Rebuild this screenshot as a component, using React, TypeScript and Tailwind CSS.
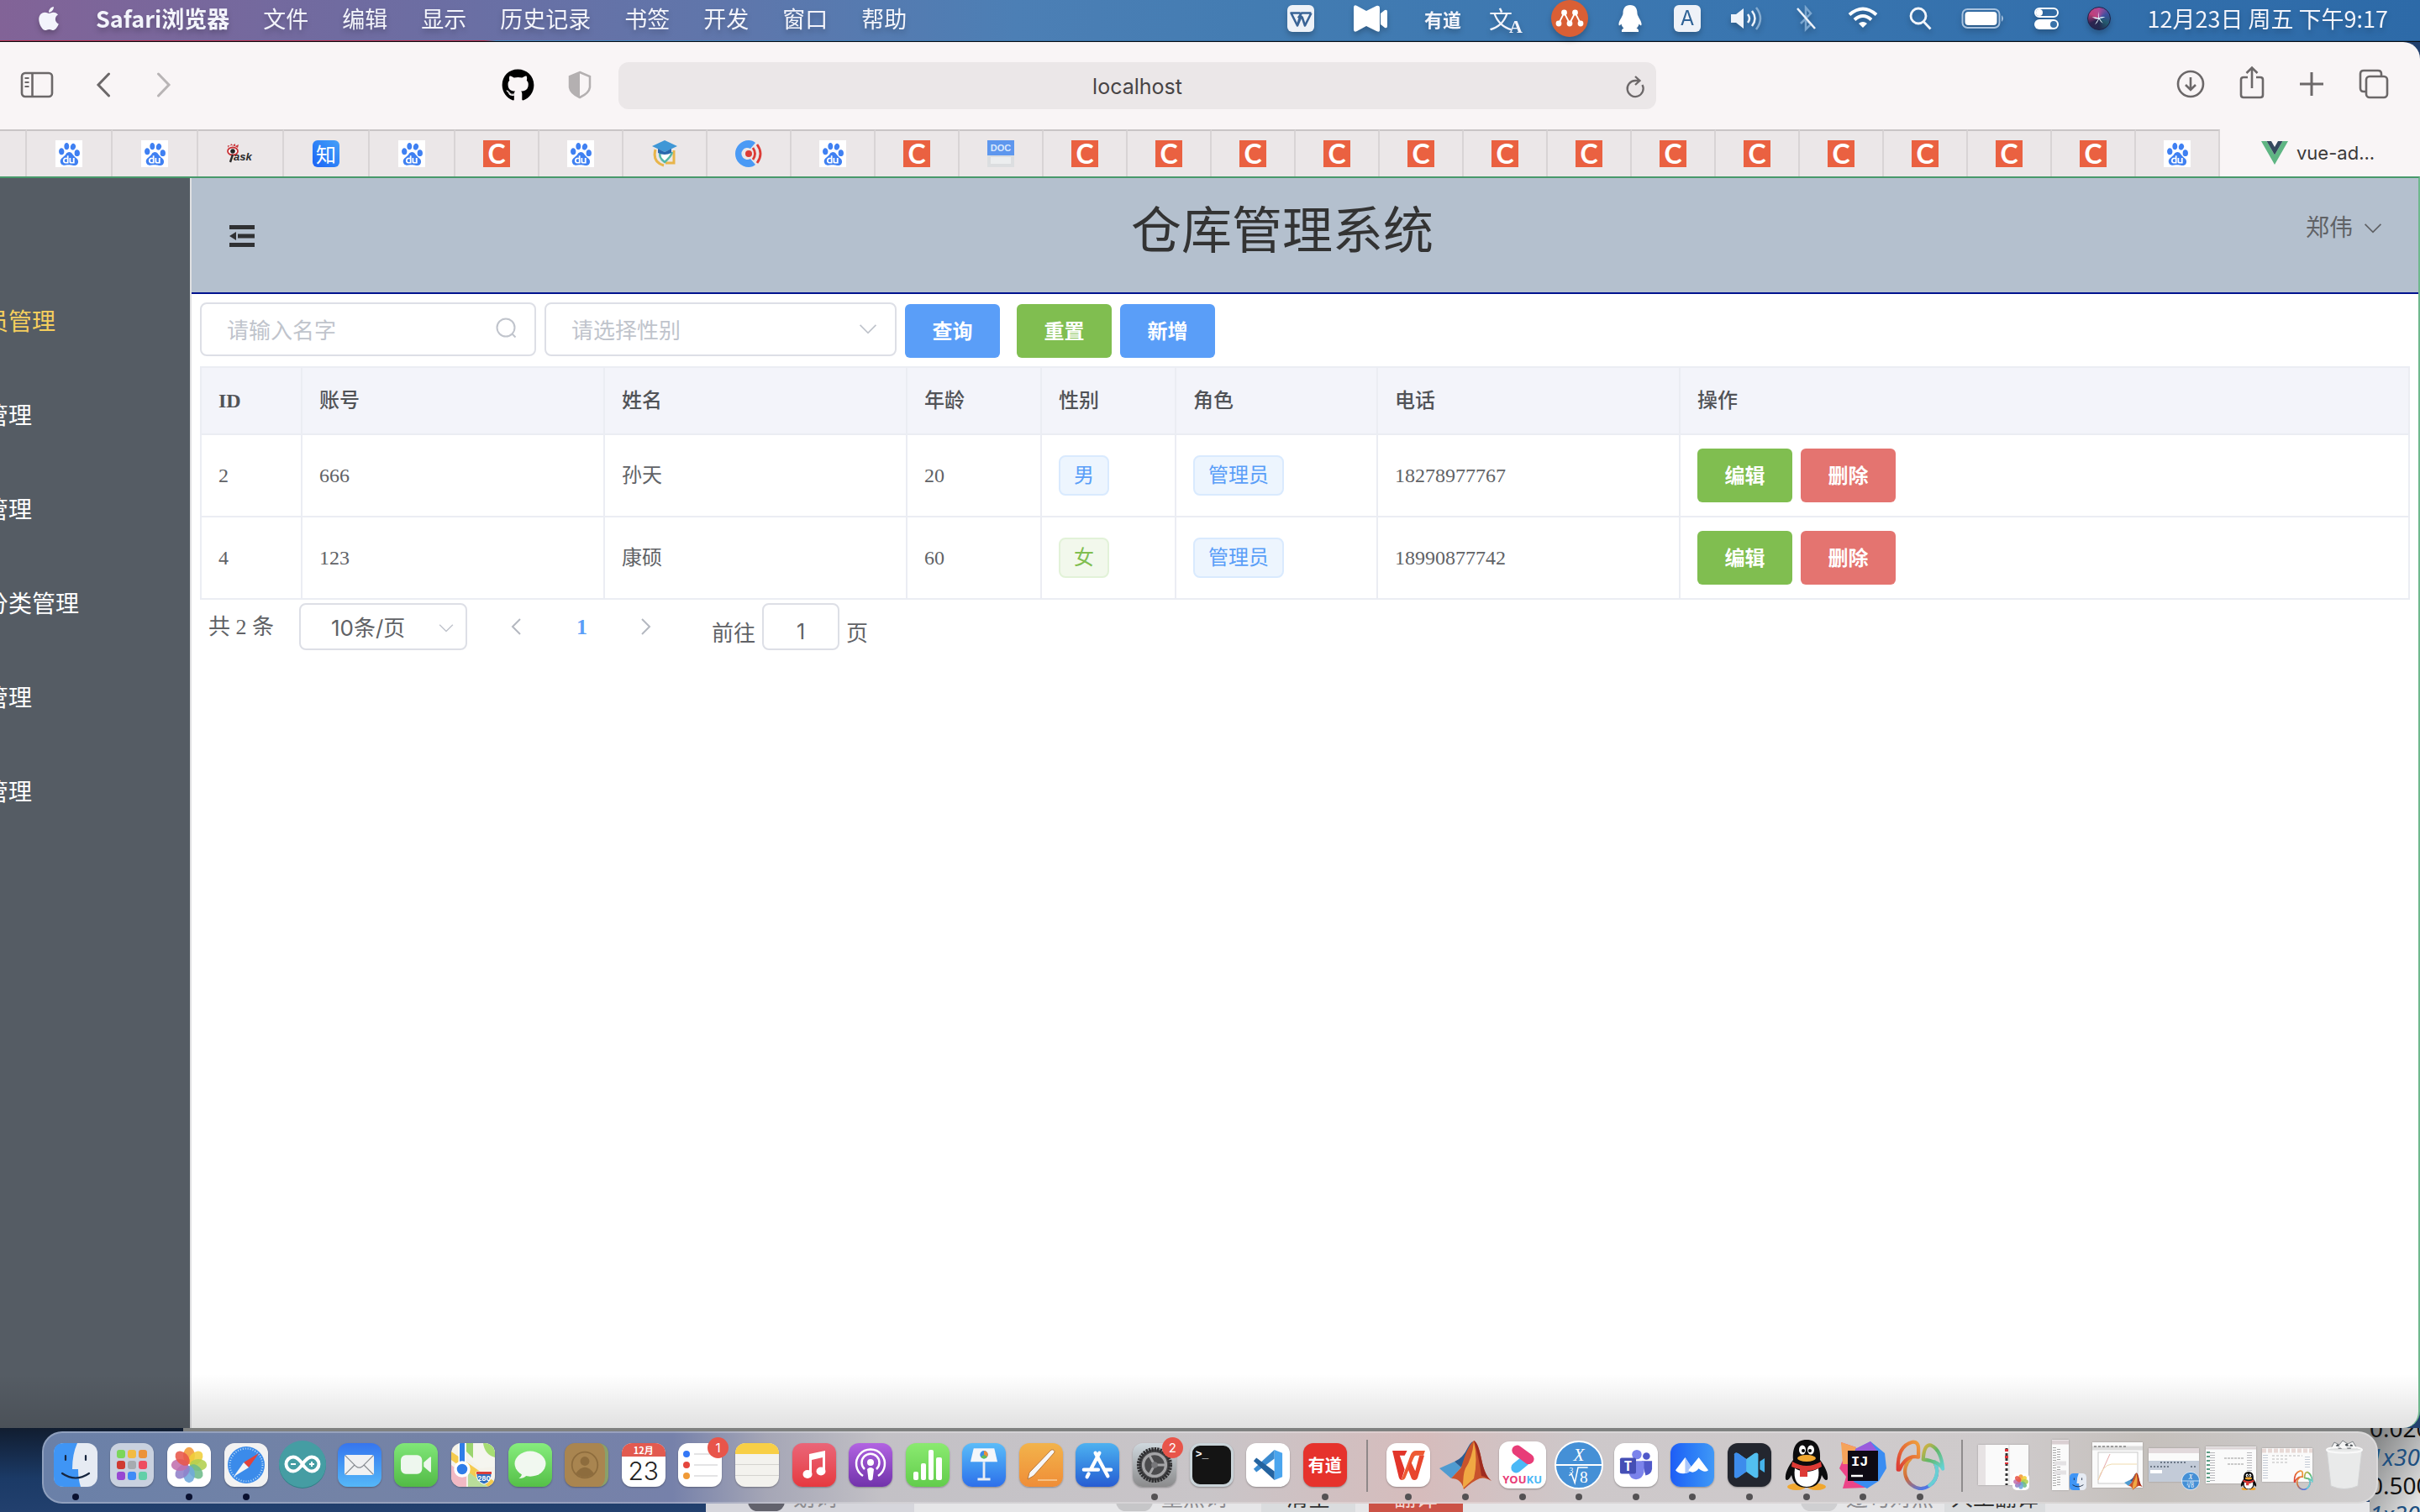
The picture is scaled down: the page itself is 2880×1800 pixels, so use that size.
import React from "react";
import { FaApple, FaGithub } from "react-icons/fa";
import { SiBaidu } from "react-icons/si";

const SANS = "font-['Inter','Noto_Sans_CJK_SC',sans-serif]";
const CJK = "font-['Noto_Sans_CJK_SC',sans-serif]";
const SERIF = "font-['Liberation_Serif','Noto_Sans_CJK_SC',serif]";

/* ---------- menu bar ---------- */

const menus = ["文件", "编辑", "显示", "历史记录", "书签", "开发", "窗口", "帮助"];

function MenuBar() {
  return (
    <div className="shrink-0">
      <div className={`${CJK} flex h-12 items-center justify-between bg-[linear-gradient(90deg,#826397_0%,#706ba0_14%,#5f76ab_30%,#4c7fb5_42%,#437cb2_52%,#3a76b0_70%,#2d6aa8_100%)] pl-[42px] pr-[38px] text-[27px] leading-[46px] text-[#f3f4fb]`}>
        <nav className="flex items-center gap-10 pb-1 drop-shadow-[0_4px_3px_rgba(0,0,0,0.22)]">
          <button aria-label="Apple"><FaApple className="size-8" /></button>
          <button className="font-bold">Safari浏览器</button>
          {menus.map((m) => <button key={m}>{m}</button>)}
        </nav>
        <div className="flex items-center gap-8 pb-1 drop-shadow-[0_4px_3px_rgba(0,0,0,0.22)]">
          <span className="flex w-10 justify-center">
            <svg viewBox="0 0 32 32" className="size-8"><rect width="32" height="32" rx="6" fill="#eef2f8" /><path d="M16 10.500L12 24.500 4.500 9.500H15.500M28.500 9.500L21 24.500 17.500 14M13 15.500L17 9.500H28.500M12 24.500L17 12.500" fill="none" stroke="#3a6496" strokeWidth="2.600" strokeLinejoin="round" /></svg>
          </span>
          <span className="flex w-[62px] justify-center">
            <svg viewBox="0 0 40 32" className="h-8 w-10" fill="#fff"><path d="M0 3Q0-1 4 1l11 6L27 1q4-1 4 3v26q0 3-4 1l-12-6-11 6q-4 2-4-2zM32 10l5-4q3-1 3 2v17q0 3-3 2l-5-4z" /></svg>
          </span>
          <span className="w-[46px] text-center text-[22px] font-bold">有道</span>
          <span className="flex w-[42px] items-center"><span className="text-[28px]">文</span><span className="-ml-1 mt-5 font-['Liberation_Serif',serif] text-[22px] leading-none font-bold">A</span></span>
          <svg viewBox="0 0 44 44" className="size-11"><circle cx="22" cy="22" r="22" fill="#d95f35" /><path d="M9 28L15.500 15l6.500 13 6.500-13L35 28" fill="none" stroke="#fff" strokeWidth="1.800" /><g fill="#fff"><circle cx="15.500" cy="15" r="3.400" /><circle cx="28.500" cy="15" r="3.400" /><circle cx="9" cy="28" r="3.400" /><circle cx="22" cy="28" r="3.400" /><circle cx="35" cy="28" r="3.400" /></g></svg>
          <span className="flex w-9 justify-center">
            <svg viewBox="0 0 28 32" className="h-8 w-7" fill="#fff"><path d="M14 0c6 0 8.500 4 8.500 10 0 3 4.500 8 5 12 .3 3-1 3-3 .5-.5 2.500-1.500 4-3 5 2 1 3 2 2.500 4.500H4C3.500 29.500 4.500 28.500 6.500 27.500c-1.500-1-2.500-2.500-3-5-2 2.500-3.300 2.500-3-.5.5-4 5-9 5-12C5.500 4 8 0 14 0z" /></svg>
          </span>
          <span className="flex w-9 justify-center"><span className={`${SANS} size-8 rounded-[6px] bg-[#eef2f8] text-center text-[24px] leading-8 text-[#2f6396]`}>A</span></span>
          <svg viewBox="0 0 42 32" className="h-8 w-[42px]"><path d="M2 11h6l9-7v24l-9-7H2z" fill="#eef3fa" /><path d="M22 11q4 5 0 10M27 7q7 9 0 18" fill="none" stroke="#eef3fa" strokeWidth="2.500" /><path d="M32 3q10 13 0 26" fill="none" stroke="#86acd0" strokeWidth="2.500" /></svg>
          <svg viewBox="0 0 34 32" className="h-8 w-[34px]" fill="none"><path d="M11 22L23 10l-6-7v26l6-6-4-4" stroke="#7ba6cf" strokeWidth="2.500" /><path d="M7 4l21 24" stroke="#eef3fa" strokeWidth="2.500" /></svg>
          <svg viewBox="0 0 38 30" className="h-[30px] w-[38px]" fill="none" stroke="#fff" strokeWidth="4"><path d="M3 10.500q16-14 32 0M9 16.500q10-9 20 0" /><path d="M19 26l-5-5q5-4 10 0z" fill="#fff" stroke="none" /></svg>
          <svg viewBox="0 0 34 32" className="h-8 w-[34px]" fill="none" stroke="#f3f6fb" strokeWidth="2.800"><circle cx="15" cy="13" r="9" /><path d="M21.500 20l8 8.500" /></svg>
          <svg viewBox="0 0 52 26" className="h-[26px] w-[52px]"><rect x="1.500" y="2" width="44" height="22" rx="6" fill="none" stroke="#a9c3df" strokeWidth="2" /><rect x="4.500" y="5" width="38" height="16" rx="4" fill="#fff" /><path d="M48 9q4 4 0 8z" fill="#a9c3df" /></svg>
          <svg viewBox="0 0 34 32" className="h-8 w-[34px]"><rect x="4" y="4" width="27" height="10" rx="5" fill="none" stroke="#fff" strokeWidth="2" /><circle cx="9" cy="9" r="4" fill="#fff" /><rect x="3" y="17" width="29" height="12" rx="6" fill="#fff" /><circle cx="26" cy="23" r="4" fill="#3a72a8" /></svg>
          <span className="flex size-7 items-center justify-center rounded-full border border-[#1f2148] bg-[conic-gradient(#b04a96,#3d4fa0,#235a6e,#23284f,#2b2350,#c1407a,#b04a96)]"><svg viewBox="0 0 24 24" className="size-5"><path d="M12 2q-1 6 0 9 4-2 9-1-5 2-8 2 2 4 5 7-4-2-6-6-2 5-6 8 3-5 5-8-4 0-9-3 5 0 9 1-1-4 1-9z" fill="#e6f8ff" /></svg></span>
          <time className="w-[298px] text-right whitespace-nowrap">12月23日 周五 下午9:17</time>
        </div>
      </div>
      <div className="h-px bg-[linear-gradient(90deg,#b5304d_20%,#4a86bd_20.500%,#2f6494_60%,#27598c_100%)]" />
      <div className="h-px bg-[#080c12]" />
    </div>
  );
}

/* ---------- browser toolbar ---------- */

function Toolbar() {
  return (
    <div className="flex h-[104px] shrink-0 items-center rounded-tr-[20px] bg-[#f9f5f6] text-[#6c6869]">
      <div className="flex w-[736px] shrink-0 items-center pb-0.5 pl-6 pr-8">
        <button aria-label="Sidebar"><svg viewBox="0 0 40 32" className="h-8 w-10" fill="none" stroke="currentColor" strokeWidth="2.600"><rect x="2" y="2" width="36" height="28" rx="4" /><path d="M14.500 2v28" /><path d="M5.500 8h5M5.500 13h5M5.500 18h5" strokeWidth="2" /></svg></button>
        <button aria-label="Back" className="ml-[50px]"><svg viewBox="0 0 18 30" className="h-[30px] w-[18px]" fill="none" stroke="currentColor" strokeWidth="3" strokeLinecap="round"><path d="M15.500 2L3 15l12.500 13" /></svg></button>
        <button aria-label="Forward" className="ml-[54px] text-[#b8b4b5]"><svg viewBox="0 0 18 30" className="h-[30px] w-[18px]" fill="none" stroke="currentColor" strokeWidth="3" strokeLinecap="round"><path d="M2.500 2L15 15 2.500 28" /></svg></button>
        <button aria-label="GitHub" className="ml-auto text-black"><FaGithub className="size-[39px]" /></button>
        <button aria-label="Privacy" className="ml-10 text-[#b4b0b1]"><svg viewBox="0 0 28 34" className="h-[34px] w-7"><path d="M14 2l12 5v13q-1 7-12 12Q3 27 2 20V7z" fill="none" stroke="currentColor" strokeWidth="2.500" /><path d="M14 2L2 7v13q1 7 12 12z" fill="currentColor" /></svg></button>
      </div>
      <div className="flex h-14 flex-1 items-center rounded-xl bg-[#ebe7e8] pr-3 pt-1">
        <input aria-label="Address" defaultValue="localhost" className={`${SANS} ml-3 min-w-0 flex-1 bg-transparent pl-[26px] text-center text-[25px] text-[#474445] outline-none`} />
        <button aria-label="Reload"><svg viewBox="0 0 26 28" className="h-7 w-[26px]" fill="none" stroke="currentColor" strokeWidth="2.300"><path d="M21.500 11a9.500 9.500 0 1 1-8.500-5h5M13 1l5.500 5L13 11" /></svg></button>
      </div>
      <div className="flex w-[909px] shrink-0 items-center justify-end gap-[41px] pr-[37px] pb-1">
        <button aria-label="Downloads"><svg viewBox="0 0 34 34" className="size-[34px]" fill="none" stroke="currentColor" strokeWidth="2.600"><circle cx="17" cy="17" r="15" /><path d="M17 9v15M11 18l6 6 6-6" /></svg></button>
        <button aria-label="Share"><svg viewBox="0 0 30 40" className="mb-1 h-10 w-[30px]" fill="none" stroke="currentColor" strokeWidth="2.600"><path d="M10 14H5q-3 0-3 3v18q0 3 3 3h20q3 0 3-3V17q0-3-3-3h-5M15 27V3M8.500 9L15 2.500 21.500 9" /></svg></button>
        <button aria-label="New tab"><svg viewBox="0 0 30 30" className="size-[30px]" stroke="currentColor" strokeWidth="3"><path d="M15 1v28M1 15h28" /></svg></button>
        <button aria-label="Tab overview"><svg viewBox="0 0 36 36" className="size-9" fill="none" stroke="currentColor" strokeWidth="2.600"><path d="M8.500 27H6q-4 0-4-4V6q0-4 4-4h17q4 0 4 4v2.500" /><rect x="9" y="9" width="25" height="25" rx="4" /></svg></button>
      </div>
    </div>
  );
}

function Favicon({ kind }: { kind: string }) {
  switch (kind) {
    case "baidu":
      return <span className="flex size-8 items-center justify-center bg-white"><SiBaidu className="size-[27px] text-[#3f80f2]" /></span>;
    case "c":
      return <span className="flex size-8 items-center justify-center bg-[#ea6141] font-['Lato',sans-serif] text-[32px] leading-8 font-bold text-white">C</span>;
    case "zhihu":
      return <span className={`${CJK} flex size-8 items-center justify-center rounded-[6px] bg-linear-to-tr from-[#1e62f5] to-[#46a0f8] text-[24px] leading-none text-white`}>知</span>;
    case "jask":
      return (
        <svg viewBox="0 0 32 32" className="size-8">
          <ellipse cx="7" cy="13" rx="6" ry="4.500" fill="#fff" stroke="#c93236" strokeWidth="1.800" /><circle cx="7" cy="13" r="2.800" fill="#222" /><path d="M1 9Q4 3 13 9L14 5 10 7 10 4 7 6 5 4 4 7 1 6z" fill="#c93236" />
          <path d="M7 17L4 26" stroke="#2b2b2b" strokeWidth="2.400" />
          <text x="8" y="24" fontSize="13" fontWeight="700" fontStyle="italic" fontFamily="Liberation Sans" fill="#2b2b2b">ask</text>
        </svg>
      );
    case "school":
      return (
        <svg viewBox="0 0 32 32" className="size-8">
          <path d="M5 11Q1 26 15 30M27 12v15H17" fill="none" stroke="#e8b54a" strokeWidth="3" /><path d="M11 14q-3 6 5 12 8-7 9-12" fill="#fff" stroke="#56b8a8" strokeWidth="2.500" />
          <path d="M16 0l15 7-15 7L1 7z" fill="#3f97d6" /><path d="M8 10v5q8 4 16 0v-5l-8 4z" fill="#2867ad" />
        </svg>
      );
    case "signal":
      return (
        <svg viewBox="0 0 32 32" className="size-8">
          <path d="M16 0A16 16 0 1 0 16 32q5 0 8-3L18 22a7 7 0 1 1 0-12l6-7q-3-3-8-3z" fill="#4a9af5" /><circle cx="16" cy="16" r="4" fill="#dc3b36" />
          <path d="M21 9q5 7 0 14M26 5q8 11 0 22" fill="none" stroke="#dc3b36" strokeWidth="2.800" />
        </svg>
      );
    case "doc":
      return (
        <span className="flex size-8 flex-col bg-[#dcdee0]">
          <span className="h-[18px] bg-[#5e97ee] text-center font-['Liberation_Sans',sans-serif] text-[11px] leading-[18px] font-bold text-[#dbe8fc]">DOC</span>
          <span className="mx-1 mt-0.5 h-2 bg-[#eceeef]" />
        </span>
      );
    default:
      return null;
  }
}

const wideTabs = ["baidu", "baidu", "jask", "zhihu", "baidu"];
const tabs = ["c", "baidu", "school", "signal", "baidu", "c", "doc", "c", "c", "c", "c", "c", "c", "c", "c", "c", "c", "c", "c", "c", "baidu"];

function TabStrip() {
  return (
    <div className="flex h-14 shrink-0 bg-[#ebe7e8]">
      <div className="w-8 border-r-2 border-t-2 border-r-[#d8d4d5] border-t-[#c9c5c6]" />
      {wideTabs.map((k, i) => (
        <button key={i} aria-label={k} className="flex w-[102px] items-center justify-center border-r-2 border-t-2 border-r-[#d8d4d5] border-t-[#c9c5c6]"><Favicon kind={k} /></button>
      ))}
      {tabs.map((k, i) => (
        <button key={i} aria-label={k} className="flex w-[100px] items-center justify-center border-r-2 border-t-2 border-r-[#d8d4d5] border-t-[#c9c5c6]"><Favicon kind={k} /></button>
      ))}
      <button className={`${SANS} flex flex-1 items-center gap-[10px] bg-[#f9f5f6] pl-[49px] text-[22px] text-[#3b3939]`}>
        <svg viewBox="0 0 32 28" className="h-7 w-8"><path d="M0 0h6.500L16 16.500 25.500 0H32L16 28z" fill="#5fb583" /><path d="M6.500 0H12l4 7 4-7h5.500L16 16.500z" fill="#35495e" /></svg>
        vue-ad...
      </button>
    </div>
  );
}

/* ---------- admin page ---------- */

const sideItems = ["员管理", "管理", "管理", "分类管理", "管理", "管理"];

function Sidebar() {
  return (
    <aside className="w-[228px] shrink-0 overflow-hidden border-r-2 border-[#e0e0e2] bg-[#555c64] pt-[116px]">
      <ul className="-ml-[18px] text-[28px] text-white">
        {sideItems.map((t, i) => (
          <li key={i} className="flex h-28 items-center"><a href="#" className={i === 0 ? "text-[#f6cf5d]" : ""}>{t}</a></li>
        ))}
      </ul>
    </aside>
  );
}

function Chevron({ className }: { className: string }) {
  return <svg viewBox="0 0 24 14" className={className} fill="none" stroke="currentColor" strokeWidth="2"><path d="M1 1l11 11L23 1" /></svg>;
}

function Btn({ tone, children }: { tone: "blue" | "green" | "red"; children: string }) {
  const bg = tone === "blue" ? "bg-[#5a9ef8]" : tone === "green" ? "bg-[#80be50]" : "bg-[#e47470]";
  return <button className={`${CJK} ${bg} h-16 w-[113px] rounded-[6px] pb-0.5 text-[24px] font-bold text-white`}>{children}</button>;
}

function Tag({ tone, children }: { tone: "blue" | "green"; children: string }) {
  const c = tone === "blue" ? "border-[#d9eafe] bg-[#edf5fe] text-[#5a9ef8]" : "border-[#e2f2d8] bg-[#f2f8ec] text-[#80be50]";
  return <span className={`${c} inline-flex h-12 items-center rounded-lg border-2 px-4 text-[24px]`}>{children}</span>;
}

const rows = [
  { id: 2, no: "666", name: "孙天", age: 20, sex: "男", role: "管理员", phone: "18278977767" },
  { id: 4, no: "123", name: "康硕", age: 60, sex: "女", role: "管理员", phone: "18990877742" },
];
const heads = ["ID", "账号", "姓名", "年龄", "性别", "角色", "电话", "操作"];
const cell = "border-r-2 border-b-2 border-[#ebedf3] pl-5 text-left";

function UserTable() {
  return (
    <table className="w-full table-fixed border-separate border-spacing-0 border-l-2 border-t-2 border-[#ebedf3] text-[24px] text-[#606266]">
      <colgroup>
        <col className="w-[120px]" /><col className="w-[360px]" /><col className="w-[360px]" /><col className="w-[160px]" />
        <col className="w-[160px]" /><col className="w-[240px]" /><col className="w-[360px]" /><col />
      </colgroup>
      <thead>
        <tr className="h-20 bg-[#f3f4fa] text-[#515357]">
          {heads.map((h) => <th key={h} scope="col" className={`${cell} ${h === "ID" ? "font-bold" : "font-medium"}`}>{h}</th>)}
        </tr>
      </thead>
      <tbody>
        {rows.map((r) => (
          <tr key={r.id} className="h-[98px]">
            <td className={cell}>{r.id}</td>
            <td className={cell}>{r.no}</td>
            <td className={cell}>{r.name}</td>
            <td className={cell}>{r.age}</td>
            <td className={cell}><Tag tone={r.sex === "男" ? "blue" : "green"}>{r.sex}</Tag></td>
            <td className={cell}><Tag tone="blue">{r.role}</Tag></td>
            <td className={cell}>{r.phone}</td>
            <td className={cell}><div className="flex gap-[10px]"><Btn tone="green">编辑</Btn><Btn tone="red">删除</Btn></div></td>
          </tr>
        ))}
      </tbody>
    </table>
  );
}

function Admin() {
  return (
    <div className={`${SERIF} relative flex flex-1 overflow-hidden rounded-br-[20px] border-r-2 border-t-2 border-r-[#6fb88e] border-t-[#47996a] bg-white`}>
      <Sidebar />
      <div className="flex min-w-0 flex-1 flex-col">
        <header className="flex h-[138px] shrink-0 border-b-2 border-[#00128f] bg-[#b4c0ce] pl-10">
          <button aria-label="Collapse menu" className="mt-[49px] flex h-10 w-10 items-center pl-[5px]">
            <svg viewBox="0 0 30 28" className="h-7 w-[30px]" fill="#303133"><path d="M0 1h30v5H0zM10 11.500h20v5H10zM0 22h30v5H0zM0 14l8-5v10z" /></svg>
          </button>
          <h1 className="flex-1 pt-5 text-center text-[60px] leading-[88px] text-[#333]">仓库管理系统</h1>
          <button className="flex h-[120px] w-[134px] items-center gap-[13px] text-[28px] text-[#606266]">郑伟<Chevron className="h-3 w-[22px]" /></button>
        </header>
        <main className="flex flex-1 flex-col px-[10px] pt-[10px]">
          <form className="flex h-[76px] items-start gap-[10px]" onSubmit={(e) => e.preventDefault()}>
            <label className="flex h-16 w-[400px] items-center rounded-lg border-2 border-[#dddfe6] pb-0.5 pl-[30px] pr-5">
              <input aria-label="名字" placeholder="请输入名字" className={`${CJK} min-w-0 flex-1 bg-transparent text-[26px] outline-none placeholder:text-[#c0c4cc]`} />
              <svg viewBox="0 0 26 26" className="size-[26px]" fill="none" stroke="#c0c4cc" strokeWidth="2"><circle cx="12" cy="12" r="10.500" /><path d="M19.500 19.500l4 4" /></svg>
            </label>
            <div className="relative">
              <select aria-label="性别" defaultValue="" className={`${CJK} h-16 w-[419px] appearance-none rounded-lg border-2 border-[#dddfe6] bg-white pb-0.5 pl-[30px] text-[26px] text-[#c0c4cc] outline-none`}>
                <option value="">请选择性别</option>
              </select>
              <Chevron className="pointer-events-none absolute right-[23px] top-[26px] h-3 w-[22px] text-[#c0c4cc]" />
            </div>
            <div className="flex gap-5 pt-0.5"><Btn tone="blue">查询</Btn><Btn tone="green">重置</Btn></div>
            <div className="pt-0.5"><Btn tone="blue">新增</Btn></div>
          </form>
          <UserTable />
          <div className="flex h-16 items-center pl-[10px] text-[26px] text-[#606266]">
            <span>共 2 条</span>
            <div className="relative ml-[30px]">
              <select aria-label="每页条数" className={`${SANS} h-14 w-[200px] appearance-none rounded-lg border-2 border-[#dddfe6] bg-white pl-9 pt-0.5 text-[26px] outline-none`}>
                <option>10条/页</option>
              </select>
              <Chevron className="pointer-events-none absolute right-4 top-[25px] h-[10px] w-[18px] text-[#c0c4cc]" />
            </div>
            <button aria-label="上一页" className="ml-[52px] text-[#b4b8c0]"><svg viewBox="0 0 12 20" className="h-5 w-3" fill="none" stroke="currentColor" strokeWidth="2"><path d="M11 1L2 10l9 9" /></svg></button>
            <button className="ml-[66px] font-bold text-[#5a9ef8]">1</button>
            <button aria-label="下一页" className="ml-16 text-[#b4b8c0]"><svg viewBox="0 0 12 20" className="h-5 w-3" fill="none" stroke="currentColor" strokeWidth="2"><path d="M1 1l9 9-9 9" /></svg></button>
            <label className="ml-[72px] flex items-center gap-2">
              <span className="pt-4">前往</span>
              <input defaultValue="1" className={`${SANS} h-14 w-[92px] rounded-lg border-2 border-[#dddfe6] pt-3 text-center text-[25px] outline-none`} />
              <span className="pt-4">页</span>
            </label>
          </div>
        </main>
      </div>
      <div className="pointer-events-none absolute inset-x-0 bottom-0 h-16 bg-linear-to-b from-transparent to-black/12" />
    </div>
  );
}

/* ---------- dock ---------- */

function Tile({ className = "", children }: { className?: string; children?: React.ReactNode }) {
  return <span className={`flex size-[52px] items-center justify-center overflow-hidden rounded-xl shadow-[0_1px_2px_rgba(0,0,0,0.3)] ${className}`}>{children}</span>;
}

function Matlab({ className }: { className: string }) {
  return (
    <svg viewBox="0 0 64 60" className={className}>
      <path d="M1 34l18-8 8 7-12 13z" fill="#4f9bd0" /><path d="M19 26q10-4 16-17 3-6 6-7L27 33z" fill="#2a5d93" />
      <path d="M15 46l12-13Q34 8 42 1q5 2 9 22t12 26q-8-5-14-3-8 3-19 13-3-13-15-13z" fill="#c8532c" /><path d="M42 2q-2 20-10 32-3 6-3 24 10-9 13-12 5-22 0-44z" fill="#f0a843" />
      <path d="M42 1q5 2 9 22t12 26q-8-6-12-6Q48 20 42 1z" fill="#9e2b1f" />
    </svg>
  );
}

function Penguin({ className }: { className: string }) {
  return (
    <svg viewBox="0 0 54 60" className={className}>
      <ellipse cx="15" cy="56" rx="11" ry="4" fill="#f1a72f" /><ellipse cx="39" cy="56" rx="11" ry="4" fill="#f1a72f" />
      <path d="M27 0C14 0 10 10 11 24 5 32 1 40 2 47c2 3 5-1 7-5 2 11 9 15 18 15s16-4 18-15c2 4 5 8 7 5 1-7-3-15-9-23C44 10 40 0 27 0z" fill="#0c0c0e" />
      <path d="M13 34q14 8 28 0 3 21-14 22-17-1-14-22z" fill="#fff" />
      <ellipse cx="22" cy="12" rx="4" ry="5.500" fill="#fff" /><ellipse cx="32" cy="12" rx="4" ry="5.500" fill="#fff" /><circle cx="23" cy="13" r="2" /><circle cx="31" cy="13" r="2" />
      <ellipse cx="27" cy="22" rx="11" ry="4" fill="#f1a72f" /><path d="M10 26q17 10 34 0l1 6q-9 5-17 5v7h-9v-9q-6-1-10-3z" fill="#dd3a35" />
    </svg>
  );
}

function Flower({ className }: { className: string }) {
  const petals: [number, string][] = [[0, "#f29a36"], [45, "#f0cf3a"], [90, "#b2cf4e"], [135, "#6dbb8a"], [180, "#6fa9dc"], [225, "#8f7fc8"], [270, "#c06fae"], [315, "#e8574a"]];
  return (
    <svg viewBox="0 0 52 52" className={className}>
      {petals.map(([a, c]) => <ellipse key={a} cx="26" cy="14" rx="7.500" ry="11" fill={c} opacity="0.88" transform={`rotate(${a} 26 26)`} />)}
    </svg>
  );
}

function Face({ className }: { className: string }) {
  return (
    <svg viewBox="0 0 52 52" className={className}>
      <rect width="52" height="52" rx="12" fill="#e6ebf3" /><path d="M28 0H12Q0 0 0 12v28q0 12 12 12h20q-3-9-3-21h-7Q22 13 28 0z" fill="#3f95f5" />
      <path d="M14 15v5M38 15v5M10 36q16 11 32 0" fill="none" stroke="#17263f" strokeWidth="2.200" strokeLinecap="round" />
    </svg>
  );
}

function MathDisc({ className }: { className: string }) {
  return (
    <svg viewBox="0 0 60 60" className={className}>
      <circle cx="30" cy="30" r="29" fill="#4590d6" stroke="#fff" strokeWidth="2" /><path d="M1 30h58" stroke="#fff" strokeWidth="2" />
      <text x="30" y="25" textAnchor="middle" fontSize="22" fontStyle="italic" fontFamily="Liberation Serif" fill="#fff">X</text>
      <path d="M18 43l3-2 4 11 4-19h12" fill="none" stroke="#fff" strokeWidth="1.600" />
      <text x="36" y="52" textAnchor="middle" fontSize="20" fontFamily="Liberation Serif" fill="#fff">8</text><text x="18" y="40" fontSize="10" fontFamily="Liberation Serif" fill="#fff">3</text>
    </svg>
  );
}

function Navicat({ className }: { className: string }) {
  return (
    <svg viewBox="0 0 64 64" className={className} fill="none" strokeWidth="4.500" strokeLinecap="round" strokeLinejoin="round">
      <defs>
        <linearGradient id="nv" x1="0" y1="0" x2="0.600" y2="1"><stop offset="0" stopColor="#e8a13d" /><stop offset="0.500" stopColor="#cf6a3c" /><stop offset="1" stopColor="#4d77e8" /></linearGradient>
        <linearGradient id="nl" x1="0" y1="1" x2="1" y2="0"><stop offset="0" stopColor="#dc3a34" /><stop offset="1" stopColor="#efa03c" /></linearGradient>
        <linearGradient id="nr" x1="0" y1="0" x2="1" y2="1"><stop offset="0" stopColor="#e0b03c" /><stop offset="0.450" stopColor="#63b768" /><stop offset="1" stopColor="#66d3d8" /></linearGradient>
      </defs>
      <path d="M20 24a22 22 0 0 0 12 38 22 22 0 0 0 18-34" stroke="url(#nv)" /><path d="M50 28a22 22 0 0 1-6 30" stroke="#68cfd4" />
      <path d="M4 38Q3 8 22 3q8-1 8 8v11q-10-2-17 5-5 5-7 11z" stroke="url(#nl)" /><path d="M36 25Q37 5 46 7q13 6 15 30-4-9-25-12z" stroke="url(#nr)" />
    </svg>
  );
}

type App = { name: string; icon: React.ReactNode; dot?: boolean; badge?: string };

const mainApps: App[] = [
  { name: "Finder", dot: true, icon: <Face className="size-[52px]" /> },
  { name: "Launchpad", icon: <Tile className="bg-[#c9d1df]"><span className="grid grid-cols-3 gap-[3px]">
    <i className="size-[10px] rounded-[3px] bg-[#7bd65a]" /><i className="size-[10px] rounded-[3px] bg-[#f2bb42]" /><i className="size-[10px] rounded-[3px] bg-[#ec9238]" />
    <i className="size-[10px] rounded-[3px] bg-[#cf3a31]" /><i className="size-[10px] rounded-[3px] bg-[#a6abb0]" /><i className="size-[10px] rounded-[3px] bg-[#ee4d60]" />
    <i className="size-[10px] rounded-[3px] bg-[#9748d2]" /><i className="size-[10px] rounded-[3px] bg-[#3f8bf6]" /><i className="size-[10px] rounded-[3px] bg-[#62cfa8]" /></span></Tile> },
  { name: "Photos", dot: true, icon: <Tile className="bg-white"><Flower className="size-[48px]" /></Tile> },
  { name: "Safari", dot: true, icon: <Tile className="bg-[#f2f2f2]"><svg viewBox="0 0 46 46" className="size-[46px]"><circle cx="23" cy="23" r="22" fill="#3b8bea" /><circle cx="23" cy="23" r="19.500" fill="none" stroke="#bcdcf8" strokeWidth="2" strokeDasharray="1 2" /><path d="M38 9L20 20l6 6z" fill="#e3423a" /><path d="M8 37l12-17 6 6z" fill="#f4f4f4" /></svg></Tile> },
  { name: "Arduino", icon: <svg viewBox="0 0 58 58" className="size-[58px]"><circle cx="29" cy="29" r="28" fill="#2f7f85" /><circle cx="29" cy="28" r="28" fill="#459da3" /><path d="M29 28c-4-6-7-8.500-11-8.500a8.500 8.500 0 0 0 0 17c4 0 7-2.500 11-8.500s7-8.500 11-8.500a8.500 8.500 0 0 1 0 17c-4 0-7-2.500-11-8.500z" fill="none" stroke="#fff" strokeWidth="4" /><path d="M15 28h6M37 28h6M40 25v6" stroke="#fff" strokeWidth="2" /></svg> },
  { name: "Mail", icon: <Tile className="bg-linear-to-b from-[#3775ee] to-[#55b7f8]"><svg viewBox="0 0 38 26" className="h-[24px] w-[37px]"><rect width="38" height="26" rx="3" fill="#f0f1f2" /><path d="M1 1l14 14q4 3 8 0L37 1M1 25l12-12M37 25L25 13" fill="none" stroke="#85898f" strokeWidth="1.300" /></svg></Tile> },
  { name: "FaceTime", icon: <Tile className="bg-linear-to-b from-[#80e678] to-[#52bb45]"><svg viewBox="0 0 38 24" className="h-[24px] w-[37px]" fill="#eef7ee"><rect width="26" height="23" rx="6" /><path d="M28 9l8-7q1 0 1 1v17q0 1-1 1l-8-7z" /></svg></Tile> },
  { name: "Maps", icon: <Tile className="bg-[#f4f2ea]"><svg viewBox="0 0 52 52" className="size-[52px]"><path d="M28 0h24v28L34 30 20 18z" fill="#f5f5ef" /><path d="M38 0h14v17Q40 14 38 0z" fill="#a6dd74" /><path d="M18 0h8v18l-8-8z" fill="#9bd56f" /><path d="M0 10l52 36v6h-8L0 20z" fill="#f5cb4f" /><path d="M0 26l18 14v12H0z" fill="#f1b9c4" /><path d="M20 34l24 18H20z" fill="#b9dd9a" /><path d="M13 0v30" stroke="#fff" strokeWidth="9" /><path d="M13 0v30" stroke="#2f7de8" strokeWidth="6" /><circle cx="13" cy="31" r="8" fill="#2f7de8" stroke="#fff" strokeWidth="3.500" /><path d="M30 34h18q1 12-9 15-10-3-9-15z" fill="#2e6fc0" stroke="#fff" /><path d="M30 34h18v3H30z" fill="#d93f3b" /><text x="39" y="45" fontSize="8" fontWeight="700" textAnchor="middle" fontFamily="Inter" fill="#fff">280</text></svg></Tile> },
  { name: "Messages", icon: <Tile className="bg-linear-to-b from-[#86ed7d] to-[#55c047]"><svg viewBox="0 0 40 36" className="h-[35px] w-[40px]" fill="#f1f8f0"><ellipse cx="20" cy="16" rx="19" ry="15.500" /><path d="M10 26q0 6-4 8 7 0 11-5z" /></svg></Tile> },
  { name: "Contacts", icon: <Tile className="border-r-4 border-[#8aa06a] bg-[#a98550]"><svg viewBox="0 0 40 40" className="size-[36px]" fill="#8d6c3d"><circle cx="20" cy="20" r="17" fill="none" stroke="#8d6c3d" strokeWidth="2" /><circle cx="20" cy="15" r="6" /><path d="M8 31q12-16 24 0-12 10-24 0z" /></svg></Tile> },
  { name: "Calendar", icon: <Tile className="flex-col bg-white"><span className={`${CJK} h-[16px] w-full bg-[#e25a50] text-center text-[11px] leading-[16px] font-bold text-white`}>12月</span><span className={`${SANS} flex-1 text-[30px] leading-[34px] font-light text-[#222]`}>23</span></Tile> },
  { name: "Reminders", badge: "1", icon: <Tile className="bg-white"><svg viewBox="0 0 52 52" className="size-[52px]"><path d="M19 13h28M19 26h28M19 39h28" stroke="#c9c9cb" /><circle cx="10" cy="13" r="4" fill="#3478f6" /><circle cx="10" cy="26" r="4" fill="#e5463d" /><circle cx="10" cy="39" r="4" fill="#f09a37" /></svg></Tile> },
  { name: "Notes", icon: <Tile className="flex-col bg-[#f3f2ee]"><span className="h-[13px] w-full bg-[#f8cf46]" /><span className="mt-3 h-px w-full bg-[#d4d3cf]" /><span className="mt-3 h-px w-full bg-[#d4d3cf]" /><span className="flex-1" /></Tile> },
  { name: "Music", icon: <Tile className="bg-linear-to-b from-[#ea6578] to-[#e6383f]"><svg viewBox="0 0 30 34" className="h-[34px] w-[30px]" fill="#fff"><path d="M9 4l19-4v24h-3V8L12 11v17H9z" /><ellipse cx="7" cy="28" rx="5.500" ry="5" /><ellipse cx="23" cy="24.500" rx="5.500" ry="5" /></svg></Tile> },
  { name: "Podcasts", icon: <Tile className="bg-linear-to-b from-[#b263e2] to-[#7233ab]"><svg viewBox="0 0 40 40" className="size-[40px]" fill="none" stroke="#fff" strokeWidth="2.500"><path d="M11 33a17 17 0 1 1 18 0" /><path d="M13 25a10.500 10.500 0 1 1 14 0" /><circle cx="20" cy="17" r="4" fill="#fff" stroke="none" /><path d="M16 25q4-4 8 0l-1.500 12q-2.500 3-5 0z" fill="#fff" stroke="none" /></svg></Tile> },
  { name: "Numbers", icon: <Tile className="bg-linear-to-b from-[#8aea70] to-[#62cd4b]"><span className="flex h-[36px] items-end gap-[3px]"><i className="h-[10px] w-[6px] rounded-xs bg-white" /><i className="h-[20px] w-[6px] rounded-xs bg-white" /><i className="h-[36px] w-[6px] rounded-xs bg-white" /><i className="h-[27px] w-[7px] rounded-xs bg-white" /></span></Tile> },
  { name: "Keynote", icon: <Tile className="bg-linear-to-b from-[#5bbcf8] to-[#2e6fea]"><svg viewBox="0 0 36 42" className="h-[40px] w-[34px]"><path d="M5 0h26l4 17H1z" fill="#f3f6fa" /><circle cx="18" cy="8" r="5" fill="#3c8de8" /><path d="M18 8V3a5 5 0 0 1 4 8z" fill="#e8903c" /><path d="M18 8l4 3a5 5 0 0 1-8 0z" fill="#63bf58" /><path d="M18 17v21M10 39h16" stroke="#e8edf4" strokeWidth="3" /></svg></Tile> },
  { name: "Pages", icon: <Tile className="bg-linear-to-b from-[#f2b34b] to-[#ef8d37]"><svg viewBox="0 0 40 40" className="size-[40px]"><path d="M4 37L6 29 32 2q4-1 4 3L11 33z" fill="#f7f7f7" stroke="#b9793a" /><path d="M16 38h23" stroke="#f9cf9e" strokeWidth="1.500" /></svg></Tile> },
  { name: "App Store", icon: <Tile className="bg-linear-to-b from-[#4eb1f0] to-[#285cd2]"><svg viewBox="0 0 40 40" className="size-[38px]" fill="none" stroke="#fff" strokeWidth="4.500" strokeLinecap="round"><path d="M22.500 5L12 25M17.500 5L33 34M3 26h18M30 26h7M9 31l-2 4" /></svg></Tile> },
  { name: "System Preferences", dot: true, badge: "2", icon: <Tile className="bg-linear-to-b from-[#cfd8de] to-[#8b8b8c]"><svg viewBox="0 0 48 48" className="size-[46px]" fill="none"><circle cx="24" cy="24" r="19.500" fill="#4b4b4d" stroke="#2f2f31" strokeWidth="5" strokeDasharray="2.500 1" /><circle cx="24" cy="24" r="14" stroke="#a5a5a7" strokeWidth="3.500" /><path d="M24 24l-7-13M24 24h15M24 24l-7 13" stroke="#a5a5a7" strokeWidth="3" /><circle cx="24" cy="24" r="4" fill="#77777a" /></svg></Tile> },
  { name: "Terminal", icon: <Tile className="items-start justify-start border-3 border-[#c9d3d8] bg-[#141414] pl-1 pt-1"><span className="font-['Liberation_Mono',monospace] text-[13px] leading-none font-bold text-white">&gt;_</span></Tile> },
  { name: "Code", icon: <Tile className="bg-white"><svg viewBox="0 0 40 40" className="size-[38px]"><path d="M28 1l10 4v30l-10 4z" fill="#4aa5ee" /><path d="M28 1L2 25l3.500 4L28 12z" fill="#3b8bd0" /><path d="M28 39L2 15l3.500-4L28 28z" fill="#24639f" /></svg></Tile> },
  { name: "Youdao", dot: true, icon: <Tile className={`${CJK} bg-[#e6322c] text-[20px] font-bold text-white`}>有道</Tile> },
];

const moreApps: App[] = [
  { name: "WPS", dot: true, icon: <Tile className="bg-white"><svg viewBox="0 0 40 36" className="h-[35px] w-[39px]"><path d="M0 0h18l-3 6H9l6 17-4 13Q9 36 8 33z" fill="#e2352a" /><path d="M11 36L22 6q2-6 7-6h11l-2 6h-9q-2 0-3 3L16 33q-1 3-5 3z" fill="#ee5a33" /><path d="M22 12l6 13 5-19h6l-8 27q-1 3-4 3t-4-3l-4-11z" fill="#e8472e" /></svg></Tile> },
  { name: "MATLAB", dot: true, icon: <Matlab className="h-[60px] w-[64px]" /> },
  { name: "Youku", dot: true, icon: <Tile className="size-[56px] flex-col bg-white"><svg viewBox="0 0 32 36" className="h-[34px] w-[30px]" fill="none" strokeWidth="13" strokeLinecap="round"><path d="M8 29l11-9" stroke="#4bb8f6" /><path d="M9 7l15 11" stroke="#e83d78" /></svg><span className="font-['Open_Sans',sans-serif] text-[13px] leading-[14px] font-bold text-[#e83d78]">YOU<span className="text-[#4bb8f6]">KU</span></span></Tile> },
  { name: "Equation", dot: true, icon: <MathDisc className="size-[58px]" /> },
  { name: "Teams", dot: true, icon: <Tile className="bg-white"><svg viewBox="0 0 42 42" className="size-[40px]"><circle cx="34" cy="10" r="4.500" fill="#5059c9" /><path d="M28 16h13v10q-1 7-8 8z" fill="#5059c9" /><circle cx="22" cy="8" r="6" fill="#7b83eb" /><path d="M13 16h18v14q-2 9-10 9t-9-9z" fill="#7b83eb" /><rect x="1" y="12" width="20" height="20" rx="2" fill="#454fb5" /><text x="11" y="28" textAnchor="middle" fontSize="16" fontWeight="700" fontFamily="Open Sans" fill="#fff">T</text></svg></Tile> },
  { name: "Mo", dot: true, icon: <Tile className="rounded-lg bg-linear-to-r from-[#1f5df6] to-[#4098f6]"><svg viewBox="0 0 42 22" className="h-[21px] w-[40px]"><path d="M0 17L12 1l9 14q-4 6-9 6Q4 22 0 17z" fill="#fff" /><path d="M12 1l9 14q-4 6-9 6z" fill="#a9c6fb" /><path d="M16 17L29 1l12 16q-5 4-12-2-7 8-13 2z" fill="#fff" /></svg></Tile> },
  { name: "Meeting", dot: true, icon: <Tile className="bg-[#23262f]"><svg viewBox="0 0 40 34" className="h-[33px] w-[38px]"><path d="M1 3q1-3 5-1l10 7 10-7q4-2 5 1v28q-1 3-5 1l-10-7-10 7q-4 2-5-1z" fill="#52bff0" /><path d="M1 3q1-3 5-1l10 7v16L6 32q-4 2-5-1z" fill="#3d8cec" /><path d="M33 12l6-4v18l-6-4z" fill="#45b2ea" /></svg></Tile> },
  { name: "QQ", dot: true, icon: <Penguin className="h-[60px] w-[54px]" /> },
  { name: "IntelliJ IDEA", dot: true, icon: <svg viewBox="0 0 58 58" className="size-[58px]"><path d="M3 2l18 6L32 56 5 57l4-14-8-10 6-14z" fill="#ec4488" /><path d="M3 2l18 6v20H5z" fill="#f5a35a" /><path d="M20 10L38 1l17 14 2 18-9 15-14 9-16-8z" fill="#3a8df2" /><path d="M20 10l18-9 10 14-20 10z" fill="#9a5bdc" /><rect x="11" y="12" width="36" height="36" fill="#0e0a14" /><text x="15" y="30" fontSize="17" fontWeight="700" fontFamily="Liberation Mono" fill="#fff">IJ</text><path d="M15 42h14" stroke="#fff" strokeWidth="2.500" /></svg> },
  { name: "Navicat", dot: true, icon: <Navicat className="size-[60px]" /> },
];

function Thumb({ size, badge, children }: { size: string; badge: React.ReactNode; children?: React.ReactNode }) {
  return (
    <span className="relative flex size-[60px] items-center justify-center">
      <span className={`overflow-hidden bg-[#fafafa] shadow-[0_0_2px_rgba(0,0,0,0.25)] ${size}`}>{children}</span>
      <span className="absolute -right-px bottom-0 flex">{badge}</span>
    </span>
  );
}

const recents: App[] = [
  { name: "Photos window", icon: <Thumb size="h-[48px] w-[60px] border-l-[9px] border-[#e7e3e4]" badge={<span className="size-5 rounded-[5px] bg-white"><Flower className="size-5" /></span>}><svg viewBox="0 0 51 48" className="h-[48px] w-[51px]"><path d="M25 4v44" stroke="#333" strokeWidth="3" strokeDasharray="3 3" /><path d="M25 5v18" stroke="#e0353a" strokeWidth="4" strokeDasharray="3 5" /><path d="M28 0v48" stroke="#ddd" /></svg></Thumb> },
  { name: "Finder window", icon: <Thumb size="h-[60px] w-[20px]" badge={<Face className="size-5" />}><svg viewBox="0 0 20 60" className="h-[60px] w-5"><path d="M0 3h20" stroke="#dacfd2" strokeWidth="5" /><path d="M3 9v48M8 11v44" stroke="#888" strokeWidth="4" strokeDasharray="1 2" opacity="0.700" /><path d="M3 28h14M3 39h14" stroke="#e4e2e4" strokeWidth="5" /></svg></Thumb> },
  { name: "Figure", icon: <Thumb size="h-[54px] w-[60px]" badge={<Matlab className="h-[21px] w-6" />}><svg viewBox="0 0 60 54" className="h-[54px] w-[60px]"><path d="M0 7h60" stroke="#ddd" strokeWidth="5" /><path d="M2 5h38" stroke="#555" strokeDasharray="3 2" /><rect x="7" y="12" width="47" height="37" fill="#fff" stroke="#c9c9c9" /><path d="M7 45L21 14" stroke="#e5a9a9" /><path d="M7 45q5-18 16-19h30" fill="none" stroke="#f0dcae" /></svg></Thumb> },
  { name: "Equation window", icon: <Thumb size="h-[40px] w-[60px]" badge={<MathDisc className="size-[22px]" />}><svg viewBox="0 0 60 40" className="h-[40px] w-[60px]"><path d="M0 3h60" stroke="#e2d9dc" strokeWidth="6" /><path d="M0 15h60v25H0z" fill="#c3cbd8" /><path d="M14 17h32M2 22h22M50 22h8" stroke="#6d7887" strokeWidth="2" strokeDasharray="2 2" /><path d="M2 28h14" stroke="#fff" strokeWidth="4" /></svg></Thumb> },
  { name: "Chat window", icon: <Thumb size="h-[44px] w-[60px]" badge={<Penguin className="h-[22px] w-5" />}><svg viewBox="0 0 60 44" className="h-[44px] w-[60px]"><path d="M0 2h60" stroke="#dcd5d7" strokeWidth="3" /><path d="M3 6v36" stroke="#5a9c84" strokeWidth="4" strokeDasharray="2 3" /><path d="M8 7v35M52 7v35" stroke="#b9b9bd" strokeWidth="6" strokeDasharray="1 2" /><path d="M22 14h24M26 21h20" stroke="#999" strokeDasharray="3 1" /></svg></Thumb> },
  { name: "Database window", icon: <Thumb size="h-[40px] w-[60px]" badge={<Navicat className="size-6" />}><svg viewBox="0 0 60 40" className="h-[40px] w-[60px]"><path d="M0 3h60" stroke="#e8d9d6" strokeWidth="5" strokeDasharray="5 2" /><path d="M4 8v28M54 10v14" stroke="#c5ccd6" strokeWidth="6" strokeDasharray="1 2" /><path d="M12 9h36M12 13h20M12 17h18" stroke="#bbb" strokeDasharray="3 2" /></svg></Thumb> },
  { name: "Trash", icon: <svg viewBox="0 0 44 60" className="h-[60px] w-11"><path d="M5 12l5-9 6 3 4-5 6 4 6-3 6 10z" fill="#f3f3f3" stroke="#7f8488" /><path d="M13 6l5 6M24 5l4 7M31 6l-4 6" stroke="#454b50" strokeWidth="3" /><path d="M1 11h42l-5 44q-16 7-32 0z" fill="#e9eaea" stroke="#d2d3d4" /><ellipse cx="22" cy="12" rx="21" ry="3.500" fill="none" stroke="#f9f9f9" strokeWidth="2" /></svg> },
];

function DockItem({ app, dark }: { app: App; dark?: boolean }) {
  return (
    <button aria-label={app.name} className="relative flex min-w-0 flex-1 flex-col items-center">
      <span className="flex h-[60px] items-center justify-center">{app.icon}</span>
      {app.dot && <span className={`mt-1 size-2 rounded-full ${dark ? "bg-[#0a1130]" : "bg-[#545254]"}`} />}
      {app.badge && <span className={`${SANS} absolute -top-[3px] right-0 size-[25px] rounded-full bg-[#e8554a] text-center text-[15px] leading-[25px] text-white`}>{app.badge}</span>}
    </button>
  );
}

function Desktop() {
  return (
    <div className="absolute inset-0 bg-[linear-gradient(180deg,#111d30_0%,#1b3a66_60%,#22406e_100%)]">
      <div className="absolute inset-y-0 left-[218px] right-0 h-5 bg-[#7f8180]" />
      <div className={`${CJK} absolute bottom-0 left-[840px] right-0 flex h-3 overflow-hidden bg-[#e6e6e8] text-[26px] text-[#8c8c90]`}>
        <div className="flex w-[248px] bg-[#d6d6dc] pl-[50px]"><span className="-mt-3 mr-[10px] h-[23px] w-11 rounded-full bg-[#62626c]" /><span className="-mt-[22px] leading-8">划词</span></div>
        <div className="flex w-[413px] pl-[240px]"><span className="-mt-3 mr-[10px] h-[23px] w-11 rounded-full bg-[#c6c6c8]" /><span className="-mt-[22px] leading-8">重点词</span></div>
        <div className="w-[112px] bg-[#dadcde] text-center text-[#333]"><span className="-mt-[22px] block leading-8">清空</span></div>
        <div className="ml-4 w-[112px] bg-[#cb5246] text-center text-[#f3d9d6]"><span className="-mt-[22px] block leading-8">翻译</span></div>
        <div className="flex flex-1 pl-[402px]"><span className="-mt-3 mr-[10px] h-[23px] w-11 rounded-full bg-[#cfcfd1]" /><span className="-mt-[22px] leading-8">逐句对照</span></div>
        <div className="mr-[446px] w-[120px] bg-[#dadcde] text-center text-[#333]"><span className="-mt-[22px] block leading-8">人工翻译</span></div>
      </div>
      <div className="absolute inset-y-0 right-0 w-[60px] overflow-hidden bg-linear-to-br from-[#77797a] to-[#ececec] font-['Noto_Sans',sans-serif] text-[28px] leading-[34px] whitespace-nowrap text-[#111]">
        <div className="-mt-[17px]">0.020</div>
        <div className="text-[#1d4f80] italic">1x30</div>
        <div>0.500</div>
        <div className="text-[#1d4f80] italic">1x30</div>
      </div>
    </div>
  );
}

function Dock() {
  return (
    <div className="relative h-[100px] shrink-0 px-[50px] pt-1">
      <Desktop />
      <div className="relative flex h-[86px] rounded-3xl border-2 border-white/25 bg-[linear-gradient(90deg,#6a80a8_0%,#7483a6_14%,#7681aa_27%,#a5a6b6_31%,#c3c1c6_36%,#c9c5c8_50%,#d6bcbc_59%,#cdc8ca_66%,#cfcbcc_84%,#c5c0bc_90%,#cfcdce_100%)] bg-origin-border px-1 pt-2">
        {mainApps.map((a, i) => <DockItem key={a.name} app={a} dark={i < 4} />)}
        <span className="mx-[15px] h-[62px] w-0.5 bg-[#8f8889]" />
        {moreApps.map((a) => <DockItem key={a.name} app={a} />)}
        <span className="mx-[15px] h-[62px] w-0.5 bg-[#8f8c8d]" />
        {recents.map((a) => <DockItem key={a.name} app={a} />)}
      </div>
    </div>
  );
}

export default function App() {
  return (
    <div className="flex h-screen flex-col overflow-hidden bg-[#22406e]">
      <MenuBar />
      <Toolbar />
      <TabStrip />
      <Admin />
      <Dock />
    </div>
  );
}
